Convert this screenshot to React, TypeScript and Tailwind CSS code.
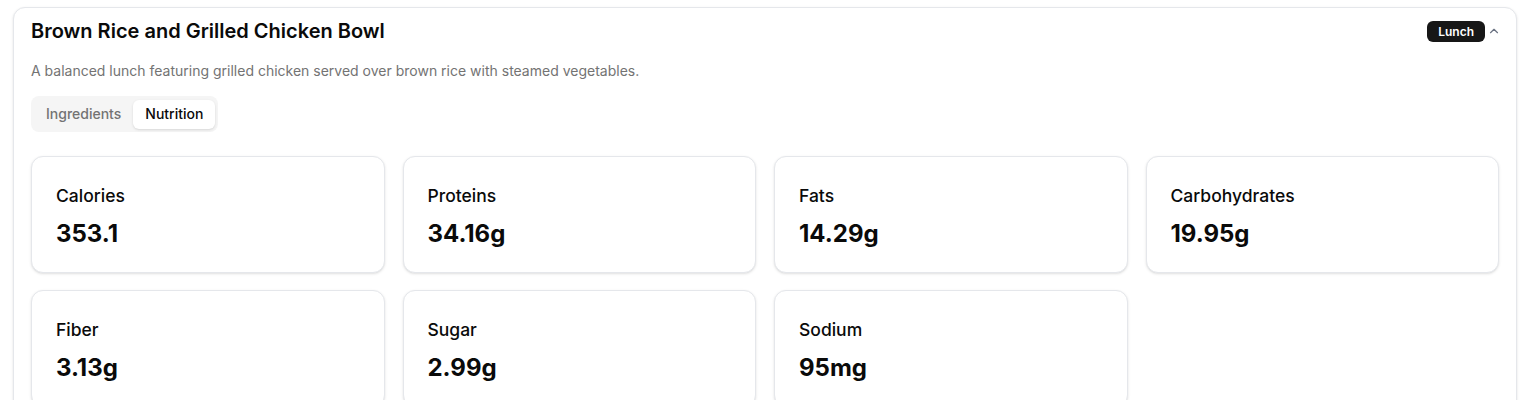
import { ChevronUp } from "lucide-react";

const nutrition = [
  { label: "Calories", value: "353.1" },
  { label: "Proteins", value: "34.16g" },
  { label: "Fats", value: "14.29g" },
  { label: "Carbohydrates", value: "19.95g" },
  { label: "Fiber", value: "3.13g" },
  { label: "Sugar", value: "2.99g" },
  { label: "Sodium", value: "95mg" },
];

export default function App() {
  return (
    <div className="min-h-screen bg-white pt-[7px] pl-[13px] pr-[10px] font-['Inter',sans-serif] text-[#0a0a0a]">
      <div className="rounded-xl border border-gray-200 bg-white shadow-sm px-[17px] pt-[9px] pb-6">
        {/* header */}
        <div className="flex items-center justify-between">
          <h2 className="text-xl font-semibold leading-7">Brown Rice and Grilled Chicken Bowl</h2>
          <div className="flex items-center gap-[2px] mr-[-2px]">
            <span className="rounded-md bg-[#171717] px-[11px] py-[3px] text-xs font-semibold leading-[15px] text-white">Lunch</span>
            <ChevronUp className="w-3.5 h-3.5 text-gray-500" strokeWidth={2} />
          </div>
        </div>
        <p className="mt-4 text-sm leading-5 text-[#737373]">
          A balanced lunch featuring grilled chicken served over brown rice with steamed vegetables.
        </p>

        {/* tabs */}
        <div className="mt-[15px] inline-flex h-9 items-center rounded-lg bg-[#f5f5f5] p-[3px]">
          <button className="h-[29px] px-3 text-sm font-medium text-[#737373]">Ingredients</button>
          <button className="h-[29px] px-3 rounded-md bg-white text-sm font-medium text-[#0a0a0a] shadow-sm">Nutrition</button>
        </div>

        {/* nutrition grid */}
        <div className="mt-6 grid grid-cols-4 gap-x-[18px] gap-y-[17px]">
          {nutrition.map(n => (
            <div key={n.label} className="rounded-xl border border-gray-200 bg-white shadow-sm px-6 pt-[27px] pb-[22px]">
              <p className="text-[17.5px] font-medium leading-6">{n.label}</p>
              <p className="mt-[10px] text-2xl font-bold leading-8">{n.value}</p>
            </div>
          ))}
        </div>
      </div>
    </div>
  );
}
